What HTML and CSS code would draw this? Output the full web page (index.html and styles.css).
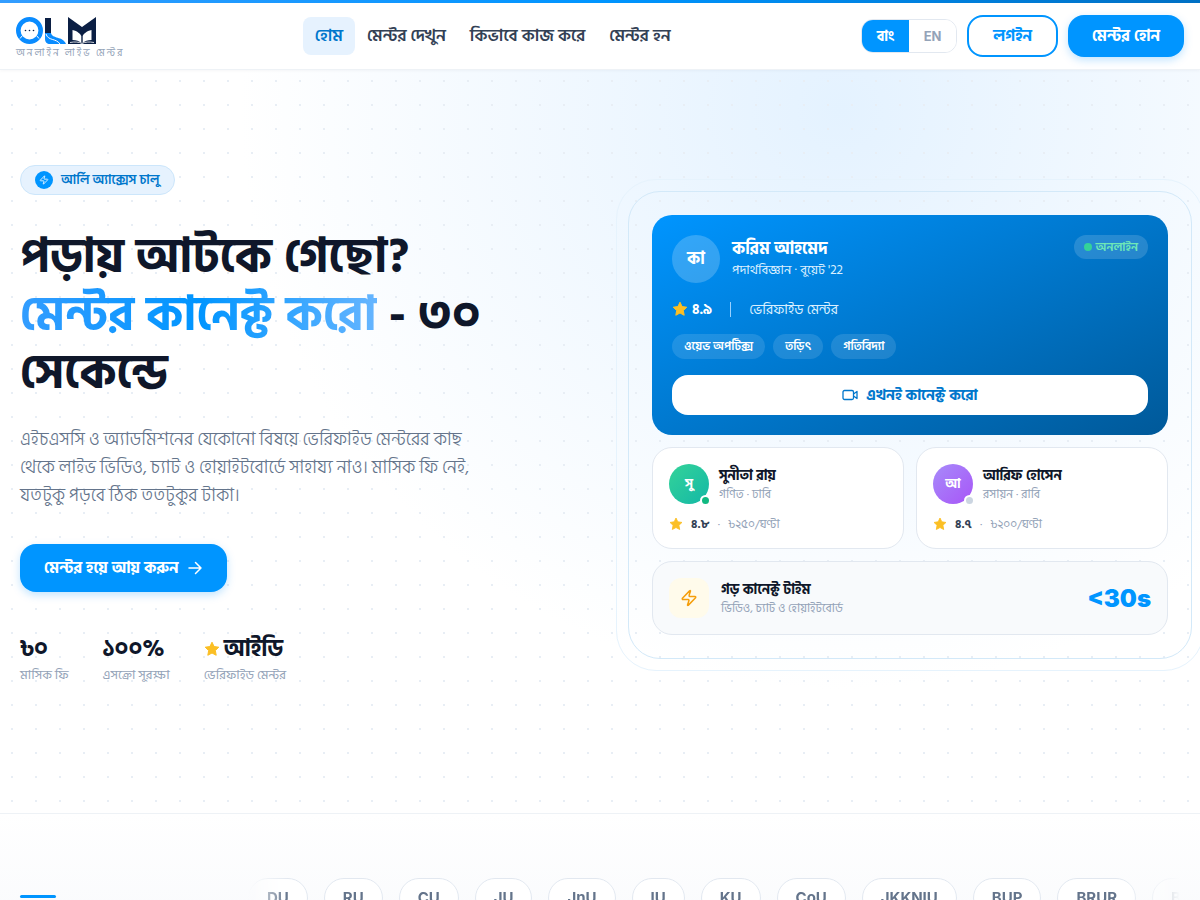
FILE: index.html
```html
<!DOCTYPE html>
<html lang="bn">
<head>
  <meta charset="utf-8">
  <meta name="viewport" content="width=device-width, initial-scale=1">
  <title>OLM</title>
  <link rel="stylesheet" href="styles.css">
</head>
<body>

<svg class="sprite" aria-hidden="true">
  <symbol id="star" viewBox="0 0 24 24">
    <path d="M12 1.8l3.1 6.5 7.1 1-5.2 5 1.3 7.1L12 18l-6.3 3.4L7 14.300l-5.200-5 7.100-1z" fill="currentColor" stroke="currentColor" stroke-width="1.500" stroke-linejoin="round"/>
  </symbol>
  <symbol id="bolt" viewBox="0 0 24 24">
    <path d="M4 14a1 1 0 0 1-.78-1.630l9.900-10.200a.5.5 0 0 1 .86.46l-1.920 6.020A1 1 0 0 0 13 10h7a1 1 0 0 1 .78 1.630l-9.900 10.200a.5.5 0 0 1-.86-.46l1.920-6.020A1 1 0 0 0 11 14z" fill="none" stroke="currentColor" stroke-width="2" stroke-linecap="round" stroke-linejoin="round"/>
  </symbol>
</svg>

<header class="header">
  <a href="#" class="logo" aria-label="OLM">
    <svg class="logo-mark" viewBox="0 0 80 28" width="80" height="28">
      <circle cx="13.500" cy="13.500" r="11.200" fill="#fff" stroke="#0a8cff" stroke-width="4.600"/>
      <path d="M6.500 18.500l-2.500 3M20.500 18.500l2.500 3" stroke="#fff" stroke-width="1"/>
      <g fill="#0b1f44"><circle cx="9.500" cy="13.500" r=".8"/><circle cx="13.500" cy="13.500" r=".8"/><circle cx="17.500" cy="13.500" r=".8"/></g>
      <path d="M29 1h6v15h-6z" fill="#0b1f44"/>
      <path d="M29 16h6c1 6 12 3 15 11H34c-3 0-5-2-5-5z" fill="#0a8cff"/>
      <path d="M30 17c2 7 10 4 14 10" fill="none" stroke="#fff" stroke-width="1"/>
      <path d="M52 0l14 10L80 0v27H52z" fill="#0b1f44"/>
      <path d="M56.500 13c5 1 8 4 8.800 6v7c-2-2-5-3-8.800-3zM75.500 13c-5 1-8 4-8.800 6v7c2-2 5-3 8.800-3z" fill="#fff"/>
      <path d="M54 25.500c5-1 9-.5 12 1 3-1.500 7-2 12-1" fill="none" stroke="#fff" stroke-width=".8"/>
    </svg>
    <span class="logo-text">অনলাইন লাইভ মেন্টর</span>
  </a>

  <nav class="nav">
    <a href="#" class="active">হোম</a>
    <a href="#">মেন্টর দেখুন</a>
    <a href="#">কিভাবে কাজ করে</a>
    <a href="#">মেন্টর হন</a>
  </nav>

  <div class="header-actions">
    <div class="lang">
      <button type="button" class="on">বাং</button>
      <button type="button">EN</button>
    </div>
    <a href="#" class="btn btn-outline">লগইন</a>
    <a href="#" class="btn btn-primary">মেন্টর হোন</a>
  </div>
</header>

<main>
  <section class="hero">
    <div class="hero-inner">
      <div class="hero-copy">
        <div class="badge">
          <span class="badge-icon"><svg width="10" height="10"><use href="#bolt"/></svg></span>
          আর্লি অ্যাক্সেস চালু
        </div>
        <h1>পড়ায় আটকে গেছো?<br><span class="grad">মেন্টর কানেক্ট করো</span> - ৩০ সেকেন্ডে</h1>
        <p class="lead">এইচএসসি ও অ্যাডমিশনের যেকোনো বিষয়ে ভেরিফাইড মেন্টরের কাছ থেকে লাইভ ভিডিও, চ্যাট ও হোয়াইটবোর্ডে সাহায্য নাও। মাসিক ফি নেই, যতটুকু পড়বে ঠিক ততটুকুর টাকা।</p>
        <a href="#" class="btn btn-primary btn-lg">মেন্টর হয়ে আয় করুন
          <svg width="16" height="16" viewBox="0 0 16 16" fill="none" stroke="currentColor" stroke-width="1.500" stroke-linecap="round" stroke-linejoin="round"><path d="M2 8h12M8.500 2.500L14 8l-5.500 5.500"/></svg>
        </a>
        <div class="stats">
          <div class="stat"><strong>৳০</strong><span>মাসিক ফি</span></div>
          <div class="stat"><strong>১০০%</strong><span>এসক্রো সুরক্ষা</span></div>
          <div class="stat"><strong><svg class="star" width="16" height="16"><use href="#star"/></svg>আইডি</strong><span>ভেরিফাইড মেন্টর</span></div>
        </div>
      </div>

      <div class="hero-visual">
        <div class="main-card">
          <div class="main-top">
            <div class="avatar avatar-lg">কা</div>
            <div class="who">
              <h2>করিম আহমেদ</h2>
              <p>পদার্থবিজ্ঞান · বুয়েট '22</p>
            </div>
            <span class="online">অনলাইন</span>
          </div>
          <div class="main-meta">
            <svg class="star" width="16" height="16"><use href="#star"/></svg>
            <b>৪.৯</b>
            <i class="sep"></i>
            <span>ভেরিফাইড মেন্টর</span>
          </div>
          <div class="tags"><span>ওয়েভ অপটিক্স</span><span>তড়িৎ</span><span>গতিবিদ্যা</span></div>
          <button type="button" class="connect">
            <svg width="16" height="16" viewBox="0 0 16 16" fill="none" stroke="currentColor" stroke-width="1.300" stroke-linejoin="round"><rect x="1" y="3.500" width="10.500" height="9" rx="1.500"/><path d="M11.500 7l3.500-2.500v7L11.500 9"/></svg>
            এখনই কানেক্ট করো
          </button>
        </div>

        <div class="mini-row">
          <div class="mini">
            <div class="mini-top">
              <div class="avatar green">সু<i class="dot"></i></div>
              <div class="who"><h3>সুনীতা রায়</h3><p>গণিত · ঢাবি</p></div>
            </div>
            <div class="mini-meta"><svg class="star" width="14" height="14"><use href="#star"/></svg><b>৪.৮</b><span>·</span><span>৳২৫০/ঘণ্টা</span></div>
          </div>
          <div class="mini">
            <div class="mini-top">
              <div class="avatar purple">আ<i class="dot off"></i></div>
              <div class="who"><h3>আরিফ হোসেন</h3><p>রসায়ন · রাবি</p></div>
            </div>
            <div class="mini-meta"><svg class="star" width="14" height="14"><use href="#star"/></svg><b>৪.৭</b><span>·</span><span>৳২০০/ঘণ্টা</span></div>
          </div>
        </div>

        <div class="time-card">
          <div class="time-icon"><svg width="18" height="18"><use href="#bolt"/></svg></div>
          <div class="who"><h3>গড় কানেক্ট টাইম</h3><p>ভিডিও, চ্যাট ও হোয়াইটবোর্ড</p></div>
          <div class="time-value">&lt;30s</div>
        </div>
      </div>
    </div>
  </section>

  <section class="unis">
    <div class="unis-label"></div>
    <div class="unis-track">
      <span>DU</span><span>RU</span><span>CU</span><span>JU</span><span>JnU</span><span>IU</span><span>KU</span><span>CoU</span><span>JKKNIU</span><span>BUP</span><span>BRUR</span><span>BU</span>
    </div>
  </section>
</main>

</body>
</html>
```
FILE: styles.css
```css
* {
  box-sizing: border-box;
}

body {
  margin: 0;
  font-family: "Hind Siliguri", "Noto Sans Bengali", sans-serif;
  color: #0f172a;
  background: #fff;
  overflow-x: hidden;
}

h1, h2, h3, p {
  margin: 0;
}

a {
  text-decoration: none;
  color: inherit;
}

button {
  font-family: inherit;
  border: 0;
  cursor: pointer;
}

svg {
  flex-shrink: 0;
}

.sprite {
  display: none;
}

.star {
  color: #fbbf24;
}

/* header */
.header {
  display: flex;
  align-items: center;
  justify-content: space-between;
  height: 70px;
  padding: 3px 16px 0;
  background: linear-gradient(90deg, #339dff, #0095ff 50%, #0070c4) top / 100% 3px no-repeat, #fff;
  border-bottom: 1px solid #eef2f6;
  box-shadow: 0 1px 3px rgba(15, 23, 42, 0.04);
  position: relative;
}

.logo {
  display: flex;
  flex-direction: column;
  gap: 2px;
  padding-top: 3px;
}

.logo-text {
  font-size: 10px;
  line-height: 12px;
  letter-spacing: 2px;
  color: #94a3b8;
}

.nav {
  display: flex;
}

.nav a {
  padding: 8px 12px;
  border-radius: 8px;
  font-size: 17px;
  line-height: 22px;
  font-weight: 600;
  color: #334155;
}

.nav .active {
  background: #e6f2fe;
  color: #0077cc;
}

.header-actions {
  display: flex;
  align-items: center;
  gap: 10px;
}

.lang {
  display: flex;
  height: 34px;
  border: 1px solid #e2e8f0;
  border-radius: 12px;
  overflow: hidden;
}

.lang button {
  width: 47px;
  padding: 0;
  background: #fff;
  color: #94a3b8;
  font-family: Inter, "Hind Siliguri", sans-serif;
  font-size: 13px;
  font-weight: 700;
}

.lang .on {
  background: #0095ff;
  color: #fff;
  font-family: inherit;
  font-size: 14px;
}

.btn {
  display: inline-flex;
  align-items: center;
  justify-content: center;
  gap: 8px;
  height: 42px;
  padding: 0 24px;
  border-radius: 16px;
  font-size: 16px;
  font-weight: 700;
}

.btn-outline {
  border: 2px solid #0095ff;
  background: #fff;
  color: #0095ff;
}

.btn-primary {
  background: #0095ff;
  color: #fff;
  box-shadow: 0 3px 8px rgba(0, 149, 255, 0.25);
}

.btn-lg {
  height: 48px;
  margin-top: 34px;
}

/* hero */
.hero {
  padding: 95px 20px 128px;
  background:
    radial-gradient(circle, #e8eef5 1px, transparent 1px) 0 -1px / 24px 24px,
    radial-gradient(ellipse 600px 580px at 840px 40px, #e4f2ff, rgba(255, 255, 255, 0)),
    #fff;
  border-bottom: 1px solid #eef2f6;
}

.hero-inner {
  display: grid;
  grid-template-columns: 1fr 1fr;
  gap: 80px;
  align-items: center;
  max-width: 1160px;
  margin: 0 auto;
}

.badge {
  display: flex;
  align-items: center;
  gap: 8px;
  width: fit-content;
  height: 30px;
  padding: 0 14px;
  border: 1px solid #cce6fb;
  border-radius: 15px;
  background: #e6f2fe;
  color: #0077cc;
  font-size: 13px;
  font-weight: 600;
}

.badge-icon {
  display: flex;
  align-items: center;
  justify-content: center;
  width: 18px;
  height: 18px;
  border-radius: 50%;
  background: #0095ff;
  color: #fff;
}

h1 {
  margin-top: 33px;
  font-size: 48px;
  line-height: 58px;
  font-weight: 700;
}

.grad {
  background: linear-gradient(90deg, #339dff, #0095ff 50%, #66b5ff);
  -webkit-background-clip: text;
  background-clip: text;
  color: transparent;
}

.lead {
  max-width: 460px;
  margin-top: 24px;
  font-size: 18px;
  line-height: 28px;
  font-weight: 300;
  color: #64748b;
}

.stats {
  display: flex;
  gap: 34px;
  margin-top: 40px;
}

.stat strong {
  display: flex;
  align-items: center;
  gap: 4px;
  font-size: 23px;
  line-height: 34px;
  font-weight: 700;
}

.stat span {
  display: block;
  font-size: 13px;
  line-height: 19px;
  color: #94a3b8;
}

/* mentor cards, with two outline frames round them */
.hero-visual {
  position: relative;
  display: grid;
  gap: 12px;
  margin: 0 12px;
}

.hero-visual::before,
.hero-visual::after {
  content: "";
  position: absolute;
  inset: -24px;
  border: 1px solid #d3e9f9;
  border-radius: 32px;
  pointer-events: none;
}

.hero-visual::after {
  inset: -36px;
  border-color: #e6f3fd;
  border-radius: 40px;
}

.main-card {
  padding: 20px;
  border-radius: 20px;
  background: linear-gradient(155deg, #0095ff, #0077cc 50%, #005999);
  color: #fff;
}

.main-top,
.mini-top {
  display: flex;
  align-items: center;
  gap: 12px;
}

.who {
  flex: 1;
}

.avatar {
  position: relative;
  display: flex;
  align-items: center;
  justify-content: center;
  width: 40px;
  height: 40px;
  border-radius: 50%;
  color: #fff;
  font-size: 13px;
  font-weight: 700;
}

.avatar-lg {
  width: 48px;
  height: 48px;
  background: rgba(255, 255, 255, 0.2);
  font-size: 17px;
}

.green {
  background: linear-gradient(135deg, #34d399, #14b8a6);
}

.purple {
  background: linear-gradient(135deg, #a78bfa, #a855f7);
}

.dot {
  position: absolute;
  right: -2px;
  bottom: -2px;
  width: 11px;
  height: 11px;
  border: 2px solid #fff;
  border-radius: 50%;
  background: #10b981;
}

.off {
  background: #cbd5e1;
}

.main-top h2 {
  font-size: 17px;
  line-height: 22px;
  font-weight: 700;
}

.main-top p {
  font-size: 13px;
  line-height: 20px;
  color: #d9efff;
}

.online {
  display: flex;
  align-items: center;
  align-self: flex-start;
  gap: 4px;
  height: 24px;
  padding: 0 10px;
  border-radius: 12px;
  background: rgba(255, 255, 255, 0.15);
  color: #6ee7b7;
  font-size: 12px;
  font-weight: 600;
}

.online::before {
  content: "";
  width: 8px;
  height: 8px;
  border-radius: 50%;
  background: #34d399;
}

.main-meta {
  display: flex;
  align-items: center;
  gap: 4px;
  height: 20px;
  margin-top: 16px;
  font-size: 14px;
}

.main-meta span {
  color: #d9efff;
}

.sep {
  width: 1px;
  height: 15px;
  margin: 0 14px;
  background: #99d1ff;
}

.tags {
  display: flex;
  gap: 8px;
  margin-top: 15px;
}

.tags span {
  height: 25px;
  padding: 0 12px;
  border-radius: 13px;
  background: rgba(255, 255, 255, 0.12);
  font-size: 12px;
  line-height: 25px;
  font-weight: 600;
}

.connect {
  display: flex;
  align-items: center;
  justify-content: center;
  gap: 8px;
  width: 100%;
  height: 40px;
  margin-top: 16px;
  border-radius: 16px;
  background: #fff;
  color: #0077cc;
  font-size: 15px;
  font-weight: 700;
}

.mini-row {
  display: grid;
  grid-template-columns: 1fr 1fr;
  gap: 12px;
}

.mini {
  height: 102px;
  padding: 16px;
  border: 1px solid #e2e8f0;
  border-radius: 20px;
  background: #fff;
}

.mini-top {
  gap: 10px;
}

h3 {
  font-size: 14px;
  line-height: 20px;
  font-weight: 700;
}

.mini p,
.time-card p {
  font-size: 12px;
  line-height: 17px;
  color: #94a3b8;
}

.mini-meta {
  display: flex;
  align-items: center;
  gap: 8px;
  height: 20px;
  margin-top: 10px;
  font-size: 12px;
  color: #94a3b8;
}

.mini-meta b {
  color: #334155;
}

.time-card {
  display: flex;
  align-items: center;
  gap: 12px;
  height: 74px;
  padding: 16px;
  border: 1px solid #e2e8f0;
  border-radius: 20px;
  background: #f8fafc;
}

.time-icon {
  display: flex;
  align-items: center;
  justify-content: center;
  width: 40px;
  height: 40px;
  border-radius: 12px;
  background: #fffbeb;
  color: #f59e0b;
}

.time-value {
  font-family: Inter, sans-serif;
  font-size: 24px;
  font-weight: 900;
  color: #0095ff;
}

/* universities */
.unis {
  display: flex;
  align-items: flex-start;
  padding: 64px 20px;
  background: linear-gradient(#fff, #f6f8fb);
}

.unis-label {
  width: 36px;
  height: 3px;
  margin: 17px 192px 0 0;
  border-radius: 2px;
  background: #0095ff;
}

.unis-track {
  display: flex;
  flex: 1;
  gap: 16px;
  overflow: hidden;
  -webkit-mask-image: linear-gradient(90deg, transparent, #000 40px, #000 calc(100% - 60px), transparent);
  mask-image: linear-gradient(90deg, transparent, #000 40px, #000 calc(100% - 60px), transparent);
}

.unis-track span {
  padding: 8px 18px;
  border: 1px solid #e2e8f0;
  border-radius: 20px;
  background: #fff;
  color: #64748b;
  font-family: Inter, sans-serif;
  font-size: 15px;
  line-height: 22px;
  font-weight: 700;
}
```
